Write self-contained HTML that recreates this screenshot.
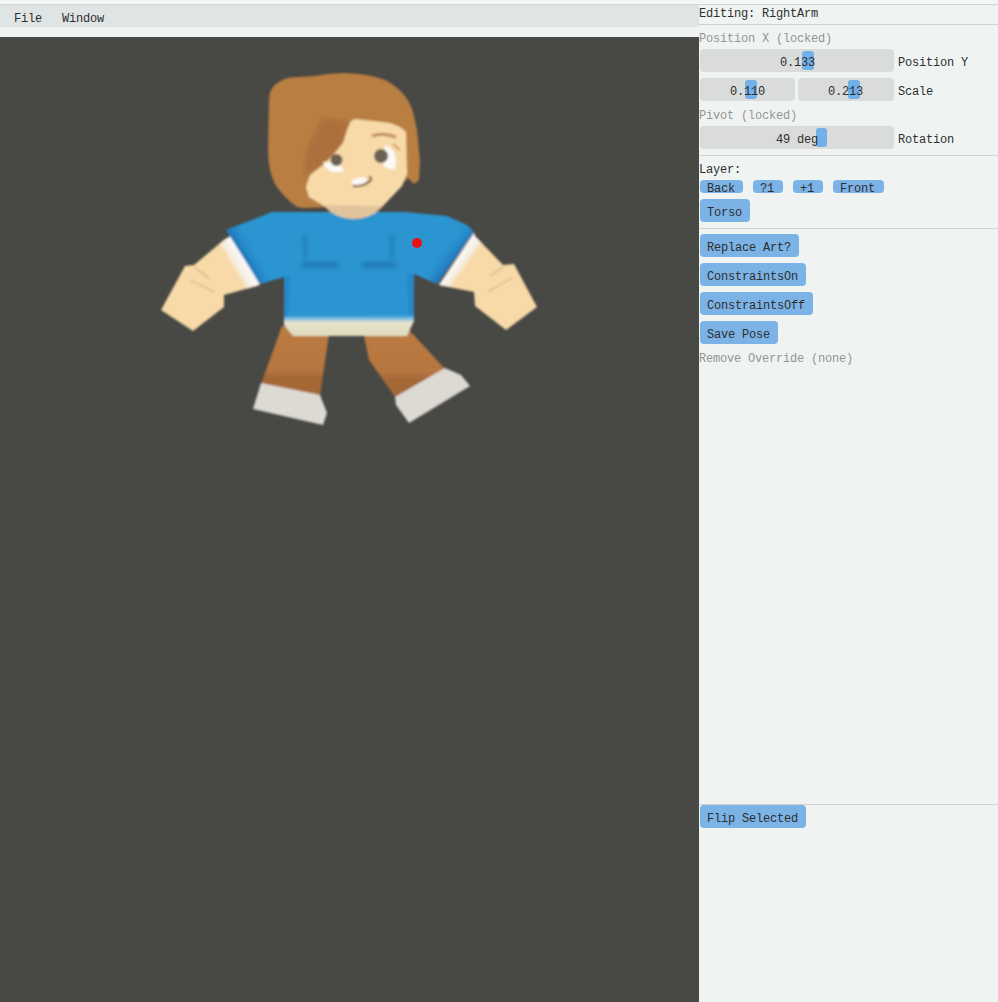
<!DOCTYPE html>
<html><head><meta charset="utf-8">
<style>
html,body{margin:0;padding:0;}
body{width:998px;height:1002px;overflow:hidden;position:relative;background:#eff4f3;font-family:"Liberation Mono",monospace;font-size:12px;letter-spacing:-0.2px;color:#2e2e2e;}
.a{position:absolute;}
.t{position:absolute;line-height:18px;height:18px;white-space:pre;}
.dis{color:#949494;}
.top{left:0;top:0;width:998px;height:4px;background:#f4f6f4;}
.menubar{left:0;top:5px;width:699px;height:22px;background:#dfe4e5;}
.canvas{left:0;top:37px;width:699px;height:965px;background:#484844;}
.sep{position:absolute;left:699px;width:299px;height:1px;background:#cfcfd4;}
.frame{position:absolute;background:#d9dcda;border-radius:4px;height:23px;}
.grab{position:absolute;background:#72b0ea;border-radius:3px;width:12px;height:19px;top:2px;}
.ft{position:absolute;top:5px;line-height:18px;white-space:pre;}
.btn{position:absolute;background:#7cb3e6;border-radius:4px;height:23px;}
.btn .ft{left:7px;}
.sbtn{position:absolute;background:#7cb3e6;border-radius:4px;height:13px;}
.sbtn .ft{left:7px;top:0;}
</style></head><body>
<div class="a top"></div>
<div class="a menubar"></div>
<div class="t" style="left:14px;top:10px;">File</div>
<div class="t" style="left:62px;top:10px;">Window</div>
<div class="a canvas"></div>

<!-- panel -->
<div class="a" style="left:0;top:4px;width:998px;height:1px;background:#d2d2d8;"></div>
<div class="t" style="left:699px;top:5px;">Editing: RightArm</div>
<div class="sep" style="top:24px;"></div>
<div class="t dis" style="left:699px;top:30px;">Position X (locked)</div>
<div class="frame" style="left:700px;top:49px;width:194px;"><div class="grab" style="left:102px;"></div><div class="ft" style="left:80px;">0.133</div></div>
<div class="t" style="left:898px;top:54px;">Position Y</div>
<div class="frame" style="left:700px;top:78px;width:95px;"><div class="grab" style="left:45px;"></div><div class="ft" style="left:30px;">0.110</div></div>
<div class="frame" style="left:798px;top:78px;width:96px;"><div class="grab" style="left:50px;"></div><div class="ft" style="left:30px;">0.213</div></div>
<div class="t" style="left:898px;top:83px;">Scale</div>
<div class="t dis" style="left:699px;top:107px;">Pivot (locked)</div>
<div class="frame" style="left:700px;top:126px;width:194px;"><div class="grab" style="left:116px;width:11px;"></div><div class="ft" style="left:76px;">49 deg</div></div>
<div class="t" style="left:898px;top:131px;">Rotation</div>
<div class="sep" style="top:155px;"></div>
<div class="t" style="left:699px;top:161px;">Layer:</div>
<div class="sbtn" style="left:700px;top:180px;width:43px;"><div class="ft">Back</div></div>
<div class="sbtn" style="left:753px;top:180px;width:30px;"><div class="ft">?1</div></div>
<div class="sbtn" style="left:793px;top:180px;width:30px;"><div class="ft">+1</div></div>
<div class="sbtn" style="left:833px;top:180px;width:51px;"><div class="ft">Front</div></div>
<div class="btn" style="left:700px;top:199px;width:50px;"><div class="ft">Torso</div></div>
<div class="sep" style="top:228px;"></div>
<div class="btn" style="left:700px;top:234px;width:99px;"><div class="ft">Replace Art?</div></div>
<div class="btn" style="left:700px;top:263px;width:106px;"><div class="ft">ConstraintsOn</div></div>
<div class="btn" style="left:700px;top:292px;width:113px;"><div class="ft">ConstraintsOff</div></div>
<div class="btn" style="left:700px;top:321px;width:78px;"><div class="ft">Save Pose</div></div>
<div class="t dis" style="left:699px;top:350px;">Remove Override (none)</div>
<div class="sep" style="top:804px;"></div>
<div class="btn" style="left:700px;top:805px;width:106px;"><div class="ft">Flip Selected</div></div>

<!-- character -->
<svg class="a" style="left:0;top:0;" width="699" height="1002" viewBox="0 0 699 1002">
<defs>
<filter id="bl" filterUnits="userSpaceOnUse" x="100" y="40" width="500" height="420"><feGaussianBlur stdDeviation="1"/></filter>
<filter id="bl2" filterUnits="userSpaceOnUse" x="100" y="40" width="500" height="420"><feGaussianBlur stdDeviation="2"/></filter>
<clipPath id="armL"><polygon points="225,239 194,265 185,266 161,310 193,331 224,307 224,295 260,285 231,236"/></clipPath>
<clipPath id="armR"><polygon points="475,236 503,265 514,264 537,307 506,330 475,306 474,292 439,285 474,233"/></clipPath>
<clipPath id="torso"><polygon points="226,230 272,212 405,212 447,216 467,225 474,232 437,284 414,274 414,320 284,322 284,277 260,284"/></clipPath>
<linearGradient id="cuffL" gradientUnits="userSpaceOnUse" x1="217" y1="244.4" x2="231" y2="236"><stop offset="0" stop-color="#f7daa8"/><stop offset="0.4" stop-color="#f5eee4"/><stop offset="1" stop-color="#fcfbfa"/></linearGradient>
<linearGradient id="cuffR" gradientUnits="userSpaceOnUse" x1="485.3" y1="241.2" x2="474" y2="233"><stop offset="0" stop-color="#f7daa8"/><stop offset="0.4" stop-color="#f5eee4"/><stop offset="1" stop-color="#fcfbfa"/></linearGradient>
<linearGradient id="slvL" gradientUnits="userSpaceOnUse" x1="232" y1="236" x2="246" y2="228"><stop offset="0" stop-color="#1f78bd"/><stop offset="1" stop-color="#2c95d0" stop-opacity="0"/></linearGradient>
<linearGradient id="slvR" gradientUnits="userSpaceOnUse" x1="473" y1="234" x2="460" y2="224"><stop offset="0" stop-color="#1f78bd"/><stop offset="1" stop-color="#2c95d0" stop-opacity="0"/></linearGradient>
<linearGradient id="leg" x1="0" y1="0" x2="0" y2="1"><stop offset="0" stop-color="#bb7b41"/><stop offset="0.62" stop-color="#b67640"/><stop offset="0.74" stop-color="#a46836"/><stop offset="1" stop-color="#a46836"/></linearGradient>
<linearGradient id="band" x1="0" y1="0" x2="0" y2="1"><stop offset="0" stop-color="#2c95d0"/><stop offset="0.12" stop-color="#5ab0e0"/><stop offset="0.35" stop-color="#e6e4cc"/><stop offset="1" stop-color="#e0dabc"/></linearGradient>
</defs>
<g filter="url(#bl)">
<!-- legs -->
<polygon fill="url(#leg)" points="282,326 329,334 320,396 261,384"/>
<polygon fill="#ddd9d3" points="261,383 320,395 327,413 323,425 253,409"/>
<polygon fill="url(#leg)" points="364,336 409,330 445,369 395,397 369,360"/>
<polygon fill="#ddd9d3" points="395,397 445,368 461,375 470,386 409,423 396,405"/>
<!-- arms -->
<polygon fill="#f7daa8" points="225,239 194,265 185,266 161,310 193,331 224,307 224,295 260,285 231,236"/>
<polygon clip-path="url(#armL)" fill="url(#cuffL)" points="231,236 260,284 248,291.2 219,243.2"/>
<path fill="none" stroke="#d6b288" stroke-width="1.3" d="M194,267 L210,279 M190,280 L214,292"/>
<polygon fill="#f7daa8" points="475,236 503,265 514,264 537,307 506,330 475,306 474,292 439,285 474,233"/>
<polygon clip-path="url(#armR)" fill="url(#cuffR)" points="474,233 437,284 448.3,292.2 485.3,241.2"/>
<path fill="none" stroke="#d6b288" stroke-width="1.3" d="M503,267 L490,276 M512,278 L488,292"/>
<!-- torso -->
<polygon fill="#2c95d0" points="226,230 272,212 405,212 447,216 467,225 474,232 437,284 414,274 414,320 284,322 284,277 260,284"/>
<g clip-path="url(#torso)">
<polygon fill="url(#slvL)" points="226,230 240,222 274,276 260,284"/>
<polygon fill="url(#slvR)" points="474,232 460,222 426,276 437,284"/>
<polygon fill="#2280c4" opacity="0.6" points="282,276 290,276 288,322 282,322"/>
<polygon fill="#2280c4" opacity="0.6" points="407,274 414,274 414,322 409,322"/>
</g>
<g stroke="#1a68a0" fill="none" opacity="0.7" filter="url(#bl2)">
<path stroke-width="2.5" d="M305,234 L305,258 M392,234 L392,258"/>
<path stroke-width="5" d="M302,265 L338,265 M362,265 L396,265"/>
</g>
<polygon fill="url(#band)" points="284,316 414,315 414,321 407,336 293,336 284,325"/>
<!-- hair -->
<path fill="#b97f42" d="M269,101 L269.5,95 Q271,88 276,84 Q282,79 290,77.5 L315,76 Q330,73 345,73 Q368,73.5 385,80 Q397,86 405,96 Q412,106 414,116 L417,130 L420,160 L419,180 L414,184 L408,178 L380,205 L305,208 L297,207 Q283,197 275,184 Q268,170 268,150 Z"/>
<path fill="#ad6f3d" filter="url(#bl2)" d="M322,118 L351,121 L343,143 L334,154 L323,165 L310,175 L304,180 L306,150 Z"/>
<!-- face -->
<path fill="#f7daa8" d="M351,121 L355,119 L390,123 L400,127 L406,132 L407,174 L402,186 L383,206 L373,214 L332,212 L321,204 L309,197 L306,187 L310,175 L323,165 L334,154 L343,143 L347,130 Z"/>
<path fill="#e2c49c" d="M323,205 L383,206 Q372,219 352,219 Q334,218 323,205 Z"/>
<!-- eyes -->
<path fill="#fbfaf8" d="M323,162 Q328,176 344,171 L339,163 Z"/>
<circle cx="336.5" cy="160" r="6" fill="#6b6152"/>
<path fill="#fbfaf8" d="M385,145 Q399,150 395,169 Q388,170 383,165 Z"/>
<circle cx="381" cy="156" r="7" fill="#6b6152"/>
<path fill="none" stroke="#c18c58" stroke-width="3" d="M372,136 Q383,132 396,137"/>
<path fill="none" stroke="#d4a878" stroke-width="2.5" d="M393,144 L400,150"/>
<!-- mouth -->
<path fill="#fbfaf8" d="M351,181 Q358,176 367,178 L365,184 L354,186 Z"/>
<path fill="none" stroke="#8a6048" stroke-width="2.4" d="M353,186 Q364,187 371,180 L370,176"/>
</g>
<circle cx="417" cy="243" r="5" fill="#f00c12"/>
</svg>
</body></html>
